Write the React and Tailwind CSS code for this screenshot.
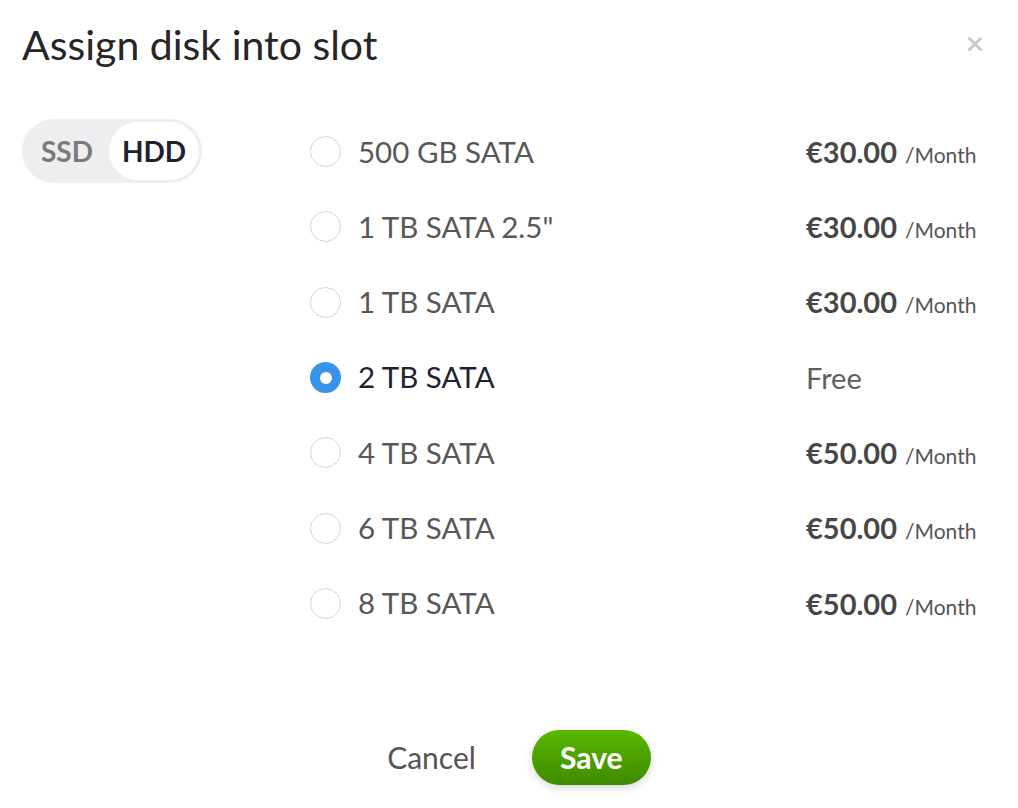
import { useState } from 'react';

const disks = [
  { id: '500gb', label: '500 GB SATA', price: '€30.00' },
  { id: '1tb25', label: '1 TB SATA 2.5"', price: '€30.00' },
  { id: '1tb', label: '1 TB SATA', price: '€30.00' },
  { id: '2tb', label: '2 TB SATA', price: null },
  { id: '4tb', label: '4 TB SATA', price: '€50.00' },
  { id: '6tb', label: '6 TB SATA', price: '€50.00' },
  { id: '8tb', label: '8 TB SATA', price: '€50.00' },
];

const App = () => {
  const [kind, setKind] = useState('HDD');
  const [selected, setSelected] = useState('2tb');

  return (
    <div className="w-[1018px] h-[808px] bg-white font-['Lato',sans-serif] text-[#2a2a2a] relative overflow-hidden">
      {/* HEADER */}
      <div className="flex items-start justify-between pl-[22px] pr-[35px] pt-[21px]">
        <h1 className="text-[41px] leading-[48px] font-normal text-[#262626]">Assign disk into slot</h1>
        <button className="mt-[15px] text-[#c9c9c9]">
          <svg width="16" height="16" viewBox="0 0 16 16" fill="none" stroke="currentColor" strokeWidth="3" strokeLinecap="round">
            <path d="M2.5 2.5 L13.5 13.5 M13.5 2.5 L2.5 13.5" />
          </svg>
        </button>
      </div>

      <div className="flex pl-[22px] mt-[45px]">
        {/* SSD / HDD switch */}
        <div className="w-[288px] pt-[5px]">
          <div className="inline-flex items-center h-[64px] w-[180px] rounded-full bg-[#edeef0] p-[3px]">
            {['SSD', 'HDD'].map((k) => (
              <button
                key={k}
                onClick={() => setKind(k)}
                className={
                  k === kind
                    ? 'h-full flex-1 rounded-full bg-white text-[#1d2130] text-[28px] font-bold'
                    : 'h-full w-[84px] rounded-full text-[#7a7a7a] text-[28px] font-bold'
                }
              >
                {k}
              </button>
            ))}
          </div>
        </div>

        {/* Disk list */}
        <div className="flex-1 flex flex-col">
          {disks.map((d) => {
            const on = d.id === selected;
            return (
              <label key={d.id} onClick={() => setSelected(d.id)} className="flex items-center h-[75.3px] cursor-pointer">
                {on ? (
                  <span className="w-[31px] h-[31px] rounded-full bg-[#3a93ea] flex items-center justify-center shrink-0">
                    <span className="w-[12px] h-[12px] rounded-full bg-white" />
                  </span>
                ) : (
                  <span className="w-[31px] h-[31px] rounded-full border border-[#d6d6d6] bg-white shrink-0" />
                )}
                <span className={`ml-[17px] w-[448px] text-[29.5px] ${on ? 'text-[#1f2331]' : 'text-[#585858]'}`}>{d.label}</span>
                {d.price ? (
                  <span className="flex items-baseline">
                    <span className="text-[29px] font-bold text-[#474747]">{d.price}</span>
                    <span className="ml-[8px] text-[21px] text-[#555]">/Month</span>
                  </span>
                ) : (
                  <span className="text-[29px] text-[#5e5e5e]">Free</span>
                )}
              </label>
            );
          })}
        </div>
      </div>

      {/* Footer actions */}
      <div className="flex items-center justify-center gap-[56px] mt-[89px] pl-[20px]">
        <button className="text-[30px] text-[#555]">Cancel</button>
        <button className="h-[55px] w-[119px] rounded-full bg-gradient-to-b from-[#5ab800] to-[#3e8b00] text-white text-[30px] font-bold shadow-[0_3px_8px_rgba(0,0,0,0.15)]">Save</button>
      </div>
    </div>
  );
};

export default App;
